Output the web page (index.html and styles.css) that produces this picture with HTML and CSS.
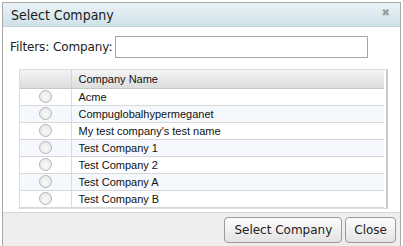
FILE: index.html
```html
<!DOCTYPE html>
<html lang="en">
<head>
	<meta charset="utf-8">
	<title>Select Company</title>
	<link rel="stylesheet" href="styles.css">
</head>
<body>
	<div class="dialog">
		<div class="titlebar">
			<span class="title">Select Company</span>
			<span class="close-x">&#x2716;</span>
		</div>
		<div class="content">
			<div class="filters">
				<label for="company">Filters: Company:</label>
				<input type="text" id="company" class="filter-input">
			</div>
			<div class="grid">
				<table>
					<thead>
						<tr><th class="sel"></th><th>Company Name</th></tr>
					</thead>
					<tbody>
						<tr><td class="sel"><span class="radio"></span></td><td>Acme</td></tr>
						<tr class="alt"><td class="sel"><span class="radio"></span></td><td>Compuglobalhypermeganet</td></tr>
						<tr><td class="sel"><span class="radio"></span></td><td>My test company's test name</td></tr>
						<tr class="alt"><td class="sel"><span class="radio"></span></td><td>Test Company 1</td></tr>
						<tr><td class="sel"><span class="radio"></span></td><td>Test Company 2</td></tr>
						<tr class="alt"><td class="sel"><span class="radio"></span></td><td>Test Company A</td></tr>
						<tr><td class="sel"><span class="radio"></span></td><td>Test Company B</td></tr>
					</tbody>
				</table>
			</div>
		</div>
		<div class="buttons">
			<button class="btn">Select Company</button>
			<button class="btn btn-close">Close</button>
		</div>
	</div>
</body>
</html>
```

FILE: styles.css
```css
* {padding: 0; margin: 0; box-sizing: border-box;}
body {
	background: #fff;
	font-family: "DejaVu Sans", Verdana, sans-serif;
	font-size: 12px;
	color: #222;
	padding: 2px 2px 0 2px;
}
.dialog {
	width: 399px;
	height: 244px;
	border: 1px solid #a8a8a8;
	border-bottom: 0;
	display: flex;
	flex-direction: column;
	background: #fff;
}
.titlebar {
	height: 24px;
	background: linear-gradient(#e9f2f6, #cfe1e9);
	border-bottom: 1px solid #c5d5dd;
	display: flex;
	align-items: center;
	justify-content: space-between;
	padding: 0 10px 0 8px;
}
.title {
	font-family: "DejaVu Sans Condensed", "DejaVu Sans", sans-serif;
	font-size: 14px;
	color: #1a1a1a;
}
.close-x {
	font-size: 10px;
	color: #9a9a9a;
	margin-top: -4px;
}
.content {
	flex: 1;
	padding: 9px 0 0 7px;
}
.filters {
	display: flex;
	align-items: center;
	gap: 3px;
	letter-spacing: -0.1px;
}
.filter-input {
	width: 253px;
	height: 22px;
	border: 1px solid #a5a5a5;
	outline: none;
}
.grid {
	margin: 11px 12px 0 9px;
	border: 1px solid #dcdcdc;
	border-right: 2px solid #c8c8c8;
	padding-right: 2px;
}
table {
	width: 100%;
	border-collapse: collapse;
	font-family: "Liberation Sans", Arial, sans-serif;
	font-size: 11px;
	color: #111;
}
th {
	height: 18px;
	background: linear-gradient(#f4f4f4, #dcdcdc);
	font-weight: normal;
	text-align: left;
	padding-left: 7px;
	border-left: 1px solid #d2d2d2;
	border-bottom: 1px solid #c8c8c8;
}
th.sel {
	border-left: 0;
	width: 51px;
	padding-left: 0;
}
td {
	height: 17px;
	padding-left: 7px;
	border-left: 1px solid #dcdcdc;
	border-bottom: 1px solid #d8d8d8;
}
td.sel {
	border-left: 0;
	text-align: center;
	padding-left: 0;
}
tr.alt td {
	background: #f5f9fd;
}
.radio {
	display: inline-block;
	width: 13px;
	height: 13px;
	border-radius: 50%;
	border: 1px solid #b4b4b4;
	background: radial-gradient(circle at 50% 60%, #fafafa, #e2e2e2);
	vertical-align: middle;
}
.buttons {
	height: 34px;
	background: #eeeeee;
	border-top: 1px solid #d6d6d6;
	display: flex;
	justify-content: flex-end;
	align-items: center;
	gap: 3px;
	padding: 0 4px 0 0;
}
.btn {
	height: 26px;
	padding: 0 9px;
	font-family: "DejaVu Sans", Verdana, sans-serif;
	font-size: 12px;
	color: #222;
	border: 1px solid #9a9a9a;
	border-radius: 4px;
	background: linear-gradient(#fdfdfd, #e3e3e3);
}
.btn-close {
	padding: 0 8px;
}
```
